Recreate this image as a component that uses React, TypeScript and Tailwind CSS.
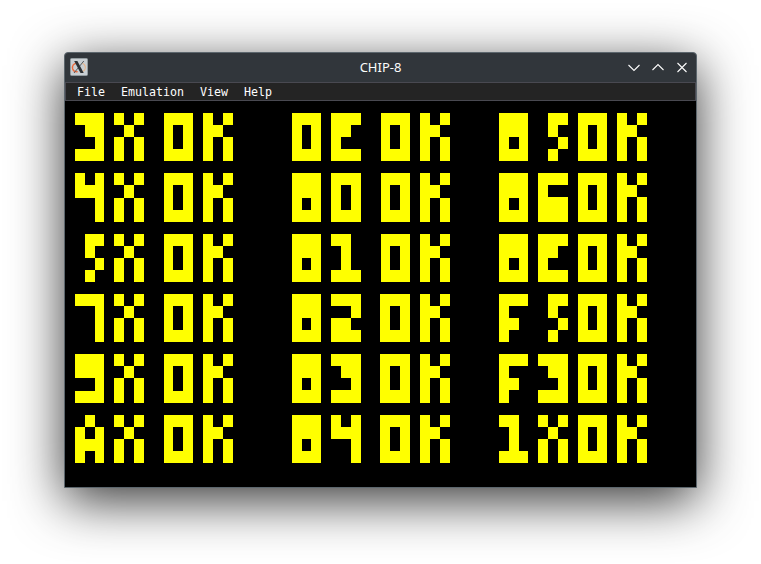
import React from "react";

const COLS = 64;
const ROWS = 32;
const SCREEN_W = 631;
const SCREEN_H = 386;

// Sprite rows, one bit per pixel, leftmost pixel in bit 2.
const SPRITES: Record<string, number[]> = {
  "0": [7, 5, 5, 7],
  "1": [6, 2, 2, 7],
  "2": [7, 1, 6, 7],
  "3": [7, 3, 1, 7],
  "4": [5, 7, 1, 1],
  "5": [3, 2, 1, 2],
  "6": [7, 4, 7, 7],
  "7": [7, 1, 1, 1],
  "8": [7, 7, 5, 7],
  "9": [7, 7, 1, 7],
  A: [2, 5, 7, 5],
  E: [7, 6, 4, 7],
  F: [7, 4, 6, 4],
  K: [5, 6, 5, 5],
  O: [7, 5, 5, 7],
  X: [5, 2, 5, 5],
};

const BLOCKS = [
  { cols: [1, 5, 10, 14], tests: ["3X", "4X", "5X", "7X", "9X", "AX"] },
  { cols: [23, 27, 32, 36], tests: ["0E", "80", "81", "82", "83", "84"] },
  { cols: [44, 48, 52, 56], tests: ["85", "86", "8E", "F5", "F3", "1X"] },
];

// Half-pixel edges round up in the upper-left triangle of the quad, down in the other.
function snap(value: number, col: number, row: number) {
  const upper = col / COLS + row / ROWS < 1;
  return upper ? Math.floor(value + 0.5) : Math.ceil(value - 0.5);
}

function Display() {
  const cells: React.ReactElement[] = [];
  BLOCKS.forEach((block) =>
    block.tests.forEach((test, line) =>
      `${test}OK`.split("").forEach((char, i) =>
        SPRITES[char].forEach((bits, dy) => {
          for (let dx = 0; dx < 3; dx++) {
            if (!(bits & (4 >> dx))) continue;
            const c = block.cols[i] + dx;
            const r = 1 + line * 5 + dy;
            const x0 = snap((c * SCREEN_W) / COLS, c, r);
            const x1 = snap(((c + 1) * SCREEN_W) / COLS, c + 1, r);
            const y0 = snap((r * SCREEN_H) / ROWS, c, r);
            const y1 = snap(((r + 1) * SCREEN_H) / ROWS, c, r + 1);
            cells.push(<rect key={`${c}-${r}`} x={x0} y={y0} width={x1 - x0} height={y1 - y0} />);
          }
        })
      )
    )
  );
  return (
    <svg width={SCREEN_W} height={SCREEN_H} className="block bg-black" fill="#ffff00" shapeRendering="crispEdges">
      {cells}
    </svg>
  );
}

function AppIcon() {
  return (
    <svg width="18" height="18" viewBox="0 0 18 18" className="-mt-px">
      <rect x="0.5" y="0.5" width="17" height="17" rx="1" fill="#c9cfd3" stroke="#929b9f" />
      <path d="M7.5 5C3.5 5.2 1.8 8 2.7 11c.9 2.3 3 3 5 2.6" fill="none" stroke="#ed6b3c" strokeWidth="1.4" />
      <path d="M12.5 5.2c3 1.6 3.8 4.8 2 7-1 1.3-2.4 1.7-4 1.5" fill="none" stroke="#e5b68f" strokeWidth="1.2" />
      <path d="M13.8 3 4 15" stroke="#555b60" strokeWidth="1" />
      <path d="M4.2 3h3.2l6.3 12h-3.2z" fill="#2b3034" />
    </svg>
  );
}

export default function App() {
  return (
    <div className="h-[564px] w-[761px] overflow-hidden bg-white pl-16 pt-[52px]">
      <div className="flex h-[436px] w-[633px] flex-col overflow-hidden rounded-t-[4px] border border-[#5c666d] bg-[#31363b] shadow-[0_13px_52px_rgba(0,0,0,0.79)]">
        <header className="grid h-[29px] shrink-0 grid-cols-[1fr_auto_1fr] items-center px-[5px]">
          <AppIcon />
          <h1 className="font-['Noto_Sans',sans-serif] text-[13px] leading-[29px] text-[#fcfcfc]">CHIP-8</h1>
          <div className="flex justify-end gap-[6px]">
            {["M3.5 6 9 11.5 14.5 6", "M3.5 11 9 5.5l5.5 5.5", "m4.5 4 9 9m0-9-9 9"].map((d) => (
              <svg key={d} width="18" height="18" viewBox="0 0 18 18" fill="none" stroke="#fcfcfc" strokeWidth="1.1">
                <path d={d} />
              </svg>
            ))}
          </div>
        </header>
        <nav className="flex h-[19px] shrink-0 gap-4 border border-[#494951] bg-[#242424] pl-[11px] pt-px font-['DejaVu_Sans_Mono',monospace] text-[11.63px] leading-[16px] text-white">
          <span>File</span>
          <span>Emulation</span>
          <span>View</span>
          <span>Help</span>
        </nav>
        <Display />
      </div>
    </div>
  );
}
